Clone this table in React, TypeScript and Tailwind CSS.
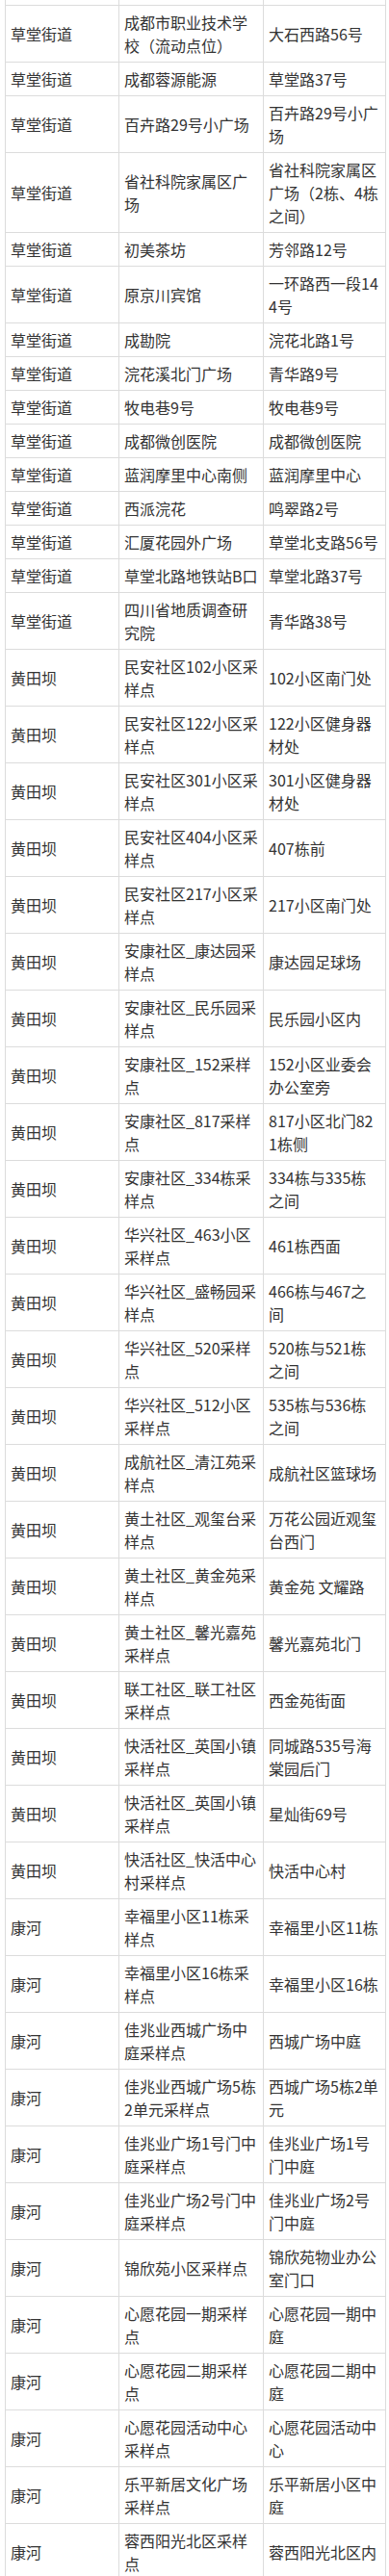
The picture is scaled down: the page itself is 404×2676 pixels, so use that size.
import React from "react";

type Row = [string, string[], string[]];

const rows: Row[] = [
  ["草堂街道", ["成都市职业技术学", "校（流动点位）"], ["大石西路56号"]],
  ["草堂街道", ["成都蓉源能源"], ["草堂路37号"]],
  ["草堂街道", ["百卉路29号小广场"], ["百卉路29号小广", "场"]],
  ["草堂街道", ["省社科院家属区广", "场"], ["省社科院家属区", "广场（2栋、4栋", "之间）"]],
  ["草堂街道", ["初美茶坊"], ["芳邻路12号"]],
  ["草堂街道", ["原京川宾馆"], ["一环路西一段14", "4号"]],
  ["草堂街道", ["成勘院"], ["浣花北路1号"]],
  ["草堂街道", ["浣花溪北门广场"], ["青华路9号"]],
  ["草堂街道", ["牧电巷9号"], ["牧电巷9号"]],
  ["草堂街道", ["成都微创医院"], ["成都微创医院"]],
  ["草堂街道", ["蓝润摩里中心南侧"], ["蓝润摩里中心"]],
  ["草堂街道", ["西派浣花"], ["鸣翠路2号"]],
  ["草堂街道", ["汇厦花园外广场"], ["草堂北支路56号"]],
  ["草堂街道", ["草堂北路地铁站B口"], ["草堂北路37号"]],
  ["草堂街道", ["四川省地质调查研", "究院"], ["青华路38号"]],
  ["黄田坝", ["民安社区102小区采", "样点"], ["102小区南门处"]],
  ["黄田坝", ["民安社区122小区采", "样点"], ["122小区健身器", "材处"]],
  ["黄田坝", ["民安社区301小区采", "样点"], ["301小区健身器", "材处"]],
  ["黄田坝", ["民安社区404小区采", "样点"], ["407栋前"]],
  ["黄田坝", ["民安社区217小区采", "样点"], ["217小区南门处"]],
  ["黄田坝", ["安康社区_康达园采", "样点"], ["康达园足球场"]],
  ["黄田坝", ["安康社区_民乐园采", "样点"], ["民乐园小区内"]],
  ["黄田坝", ["安康社区_152采样", "点"], ["152小区业委会", "办公室旁"]],
  ["黄田坝", ["安康社区_817采样", "点"], ["817小区北门82", "1栋侧"]],
  ["黄田坝", ["安康社区_334栋采", "样点"], ["334栋与335栋", "之间"]],
  ["黄田坝", ["华兴社区_463小区", "采样点"], ["461栋西面"]],
  ["黄田坝", ["华兴社区_盛畅园采", "样点"], ["466栋与467之", "间"]],
  ["黄田坝", ["华兴社区_520采样", "点"], ["520栋与521栋", "之间"]],
  ["黄田坝", ["华兴社区_512小区", "采样点"], ["535栋与536栋", "之间"]],
  ["黄田坝", ["成航社区_清江苑采", "样点"], ["成航社区篮球场"]],
  ["黄田坝", ["黄土社区_观玺台采", "样点"], ["万花公园近观玺", "台西门"]],
  ["黄田坝", ["黄土社区_黄金苑采", "样点"], ["黄金苑 文耀路"]],
  ["黄田坝", ["黄土社区_馨光嘉苑", "采样点"], ["馨光嘉苑北门"]],
  ["黄田坝", ["联工社区_联工社区", "采样点"], ["西金苑街面"]],
  ["黄田坝", ["快活社区_英国小镇", "采样点"], ["同城路535号海", "棠园后门"]],
  ["黄田坝", ["快活社区_英国小镇", "采样点"], ["星灿街69号"]],
  ["黄田坝", ["快活社区_快活中心", "村采样点"], ["快活中心村"]],
  ["康河", ["幸福里小区11栋采", "样点"], ["幸福里小区11栋"]],
  ["康河", ["幸福里小区16栋采", "样点"], ["幸福里小区16栋"]],
  ["康河", ["佳兆业西城广场中", "庭采样点"], ["西城广场中庭"]],
  ["康河", ["佳兆业西城广场5栋", "2单元采样点"], ["西城广场5栋2单", "元"]],
  ["康河", ["佳兆业广场1号门中", "庭采样点"], ["佳兆业广场1号", "门中庭"]],
  ["康河", ["佳兆业广场2号门中", "庭采样点"], ["佳兆业广场2号", "门中庭"]],
  ["康河", ["锦欣苑小区采样点"], ["锦欣苑物业办公", "室门口"]],
  ["康河", ["心愿花园一期采样", "点"], ["心愿花园一期中", "庭"]],
  ["康河", ["心愿花园二期采样", "点"], ["心愿花园二期中", "庭"]],
  ["康河", ["心愿花园活动中心", "采样点"], ["心愿花园活动中", "心"]],
  ["康河", ["乐平新居文化广场", "采样点"], ["乐平新居小区中", "庭"]],
  ["康河", ["蓉西阳光北区采样", "点"], ["蓉西阳光北区内"]],
];

const Cell: React.FC<{ lines: string[] }> = ({ lines }) => (
  <div className="flex flex-col justify-center border-r border-[#dcdcdc] px-[5px] py-[5px]">
    {lines.map((line, i) => (
      <div key={i} className="whitespace-nowrap leading-[24px]">
        {line}
      </div>
    ))}
  </div>
);

export default function App() {
  return (
    <div
      className="h-[2676px] overflow-hidden bg-white text-[16px] text-[#333]"
      style={{ fontFamily: '"Noto Sans CJK SC", "Noto Sans", sans-serif' }}
    >
      <div className="ml-[5px] w-[396px] border-l border-[#dcdcdc]">
        {/* tail of the row above, cut off by the screenshot */}
        <div className="grid h-[6px] grid-cols-[118px_150px_127px] border-b border-[#dcdcdc]">
          <div className="border-r border-[#dcdcdc]" />
          <div className="border-r border-[#dcdcdc]" />
          <div className="border-r border-[#dcdcdc]" />
        </div>
        {rows.map(([street, site, address], i) => (
          <div
            key={i}
            className="grid grid-cols-[118px_150px_127px] border-b border-[#dcdcdc]"
          >
            <Cell lines={[street]} />
            <Cell lines={site} />
            <Cell lines={address} />
          </div>
        ))}
      </div>
    </div>
  );
}
